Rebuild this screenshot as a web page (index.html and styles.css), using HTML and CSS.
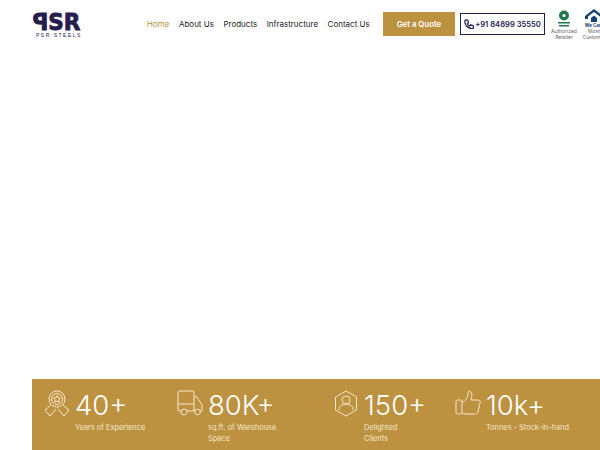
FILE: index.html
```html
<!DOCTYPE html>
<html lang="en">
<head>
    <meta charset="UTF-8">
    <meta name="viewport" content="width=device-width, initial-scale=1.0">
    <title>PSR Steels</title>
    <link rel="stylesheet" href="styles.css">
</head>
<body>
    <div class="page">
        <!-- Header -->
        <header class="header">
            <a class="logo" href="#">
                <svg width="50" height="22" viewBox="0 0 50 22">
                    <text class="logo-mark" x="0.500" y="19.500" textLength="48" lengthAdjust="spacingAndGlyphs">ꟼSR</text>
                </svg>
                <span class="logo-sub">PSR STEELS</span>
            </a>
            <nav class="menu">
                <a class="active" href="#">Home</a>
                <a href="#">About Us</a>
                <a href="#">Products</a>
                <a href="#">Infrastructure</a>
                <a href="#">Contact Us</a>
            </nav>
            <a class="button" href="#">Get a Quote</a>
            <a class="phone" href="#">
                <svg width="10" height="10" viewBox="0 0 24 24">
                    <path d="M5 2l4 1 2 6-3 2c1 3 3 5 6 6l2-3 6 2 1 4c0 2-2 3-4 3C10 23 1 14 2 5c0-2 1-3 3-3z" fill="none" stroke="#241d4f" stroke-width="3"/>
                </svg>
                +91 84899 35550
            </a>
            <div class="badge">
                <svg width="16" height="18" viewBox="0 0 16 18">
                    <circle cx="8" cy="5.500" r="5" fill="#1f7a4d"/>
                    <circle cx="8" cy="5.500" r="1.600" fill="#fff"/>
                    <rect x="2" y="12" width="12" height="1.500" fill="#1f7a4d"/>
                    <rect x="3" y="15" width="10" height="1.500" fill="#1f7a4d"/>
                </svg>
                <span>Authorized Retailer</span>
            </div>
            <div class="badge badge-house">
                <svg width="18" height="14" viewBox="0 0 18 14">
                    <path d="M9 0L18 7v3h-3V7.500L9 3 3 7.500V10H0V7z" fill="#17406e"/>
                    <path d="M6 9l3-2.500L12 9v4H6z" fill="#17406e"/>
                </svg>
                <strong>We Care</strong>
                <span>Most Customer</span>
            </div>
        </header>

        <div class="hero"></div>

        <!-- Numbers -->
        <section class="stats">
            <div class="stat">
                <svg class="stat-icon" width="26" height="27" viewBox="0 0 26 27">
                    <circle cx="13" cy="9" r="8"/>
                    <circle cx="13" cy="9" r="5.500"/>
                    <path d="M13 5.500l1.100 2.300 2.400.3-1.800 1.700.5 2.400-2.200-1.200-2.200 1.200.5-2.400-1.800-1.700 2.400-.3z"/>
                    <path d="M7 15l-6 5 5 6 6-7M19 15l6 5-5 6-6-7"/>
                </svg>
                <div>
                    <div class="stat-num">40+</div>
                    <p>Years of Experience</p>
                </div>
            </div>
            <div class="stat">
                <svg class="stat-icon" width="26" height="27" viewBox="0 0 26 27">
                    <path d="M4 21H2a1 1 0 0 1-1-1V3a2 2 0 0 1 2-2h12a2 2 0 0 1 2 2v18H10"/>
                    <path d="M1 14h16M17 7h3l5 8v6h-2M17 21h1"/>
                    <circle cx="7" cy="22" r="3"/>
                    <circle cx="20.500" cy="22" r="2.800"/>
                </svg>
                <div>
                    <div class="stat-num">80K+</div>
                    <p>sq.ft. of Warehouse<br>Space</p>
                </div>
            </div>
            <div class="stat">
                <svg class="stat-icon" width="26" height="27" viewBox="0 0 26 27">
                    <path d="M13 1l10.500 6v13L13 26 2.500 20V7z"/>
                    <circle cx="13" cy="10" r="4"/>
                    <path d="M6 20c0-4 3-6 7-6s7 2 7 6"/>
                </svg>
                <div>
                    <div class="stat-num">150+</div>
                    <p>Delighted<br>Clients</p>
                </div>
            </div>
            <div class="stat">
                <svg class="stat-icon" width="26" height="27" viewBox="0 0 26 27">
                    <rect x="1" y="10" width="6" height="14" rx="1.500"/>
                    <path d="M7 12c4-1 6-5 6-9 0-3 4-2 4 2 0 2-1 4-1 5h7c2 0 3 2 2 3l-2 9c-.5 2-2 2-3 2H11c-2 0-3-1-4-1"/>
                </svg>
                <div>
                    <div class="stat-num">10k+</div>
                    <p>Tonnes - Stock-in-hand</p>
                </div>
            </div>
        </section>
    </div>
</body>
</html>
```

FILE: styles.css
```css
html, body {
    margin: 0;
    padding: 0;
    background: #fff;
}
.page {
    width: 600px;
    height: 450px;
    overflow: hidden;
    display: flex;
    flex-direction: column;
    font-family: 'Inter', 'Open Sans', sans-serif;
    color: #241d4f;
}
.header {
    height: 48px;
    flex-shrink: 0;
    display: flex;
    align-items: center;
    padding-left: 32px;
    box-sizing: border-box;
}
.logo {
    display: block;
    flex-shrink: 0;
    width: 50px;
    margin-right: 65px;
    text-decoration: none;
}
.logo svg {
    display: block;
}
.logo-mark {
    font-family: 'DejaVu Sans', sans-serif;
    font-weight: bold;
    font-size: 23px;
    fill: #241d4f;
    stroke: #241d4f;
    stroke-width: 0.9px;
}
.logo-sub {
    display: block;
    padding-left: 4px;
    font-family: 'Liberation Sans', sans-serif;
    font-size: 5px;
    line-height: 7px;
    letter-spacing: 1.5px;
    color: #241d4f;
    white-space: nowrap;
}
.menu {
    display: flex;
    gap: 9.5px;
    width: 236px;
    flex-shrink: 0;
}
.menu a {
    font-size: 8px;
    color: #1c1c1c;
    text-decoration: none;
    white-space: nowrap;
}
.menu a.active {
    color: #bc9140;
}
.button {
    width: 72px;
    height: 24px;
    line-height: 24px;
    background: #bc9140;
    color: #fff;
    text-align: center;
    text-decoration: none;
    font-size: 7.8px;
    font-weight: 600;
    flex-shrink: 0;
    margin-right: 5px;
}
.phone {
    width: 85px;
    height: 22px;
    box-sizing: border-box;
    border: 1px solid #241d4f;
    display: flex;
    align-items: center;
    justify-content: center;
    gap: 1px;
    color: #241d4f;
    text-decoration: none;
    font-size: 7.6px;
    font-weight: 600;
    white-space: nowrap;
    flex-shrink: 0;
    margin-right: 5px;
}
.badge {
    width: 28px;
    flex-shrink: 0;
    margin-right: 4px;
    text-align: center;
    margin-top: 2px;
}
.badge svg {
    display: block;
    margin: 0 auto;
}
.badge span {
    display: block;
    font-size: 5px;
    line-height: 6px;
    color: #666;
}
.badge strong {
    display: block;
    font-size: 4.5px;
    line-height: 5px;
    color: #17406e;
}
.badge-house {
    width: 24px;
    margin-top: 0;
}
.hero {
    flex: 1;
}
.stats {
    height: 71px;
    flex-shrink: 0;
    margin-left: 32px;
    padding: 11px 0 0 12px;
    box-sizing: border-box;
    background: #bc9140;
    display: grid;
    grid-template-columns: 133px 156px 122px 1fr;
    color: #fff;
}
.stat {
    display: flex;
    gap: 5px;
}
.stat-icon {
    flex-shrink: 0;
    fill: none;
    stroke: #f5e8cc;
    stroke-width: 1;
}
.stat-num {
    font-size: 27.5px;
    font-weight: 300;
    line-height: 30px;
    white-space: nowrap;
}
.stat p {
    margin: 2px 0 0;
    font-size: 7.4px;
    line-height: 11px;
    color: #f5e8cc;
    white-space: nowrap;
}
```
